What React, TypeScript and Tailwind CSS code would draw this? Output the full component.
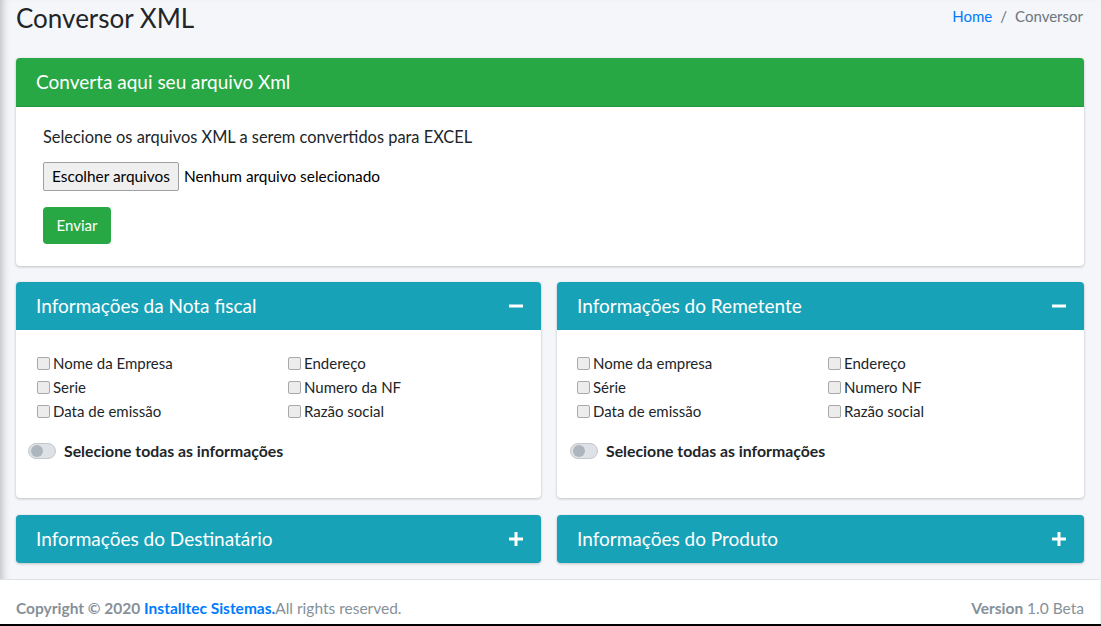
import React from 'react';

const font = { fontFamily: 'Lato, "Liberation Sans", sans-serif' };

const fieldsNota = [
  ['Nome da Empresa', 'Endereço'],
  ['Serie', 'Numero da NF'],
  ['Data de emissão', 'Razão social'],
];

const fieldsRemetente = [
  ['Nome da empresa', 'Endereço'],
  ['Série', 'Numero NF'],
  ['Data de emissão', 'Razão social'],
];

const Minus = () => (
  <svg width="14" height="14" viewBox="0 0 14 14" className="block">
    <rect x="0" y="5.5" width="14" height="3" fill="#fff" />
  </svg>
);

const Plus = () => (
  <svg width="14" height="14" viewBox="0 0 14 14" className="block">
    <rect x="0" y="5.5" width="14" height="3" fill="#fff" />
    <rect x="5.5" y="0" width="3" height="14" fill="#fff" />
  </svg>
);

const Check: React.FC<{ label: string }> = ({ label }) => (
  <label className="flex items-center h-6 text-[15px] text-[#212529]">
    <span className="w-[13px] h-[13px] mr-[3px] rounded-[2px] border border-[#a9a9a9] bg-[#ececec]" />
    {label}
  </label>
);

const Toggle = () => (
  <div className="relative w-[28px] h-[16px] rounded-full bg-[#dee2e6] border border-[#c3c8cd]">
    <div className="absolute left-[2px] top-[1px] w-[12px] h-[12px] rounded-full bg-[#adb5bd]" />
  </div>
);

const InfoCard: React.FC<{ title: string; rows: string[][]; offset: string; tOffset: string }> = ({ title, rows, offset, tOffset }) => (
  <div className="bg-white rounded shadow-[0_0_1px_rgba(0,0,0,0.125),0_1px_3px_rgba(0,0,0,0.2)] h-[216px]">
    <div className="h-[48px] bg-[#17a2b8] rounded-t flex items-center justify-between pl-[20px] pr-[18px]">
      <span className="text-white text-[19px]">{title}</span>
      <Minus />
    </div>
    <div className={`pt-[21px] ${offset}`}>
      {rows.map((r) => (
        <div key={r[0]} className="grid grid-cols-[251px_1fr]">
          <Check label={r[0]} />
          <Check label={r[1]} />
        </div>
      ))}
    </div>
    <div className={`flex items-center gap-2 mt-[16px] ${tOffset}`}>
      <Toggle />
      <span className="font-bold text-[15.8px] text-[#212529]">Selecione todas as informações</span>
    </div>
  </div>
);

const ClosedCard: React.FC<{ title: string }> = ({ title }) => (
  <div className="h-[48px] bg-[#17a2b8] rounded shadow-[0_0_1px_rgba(0,0,0,0.125),0_1px_3px_rgba(0,0,0,0.2)] flex items-center justify-between pl-[20px] pr-[18px]">
    <span className="text-white text-[19px]">{title}</span>
    <Plus />
  </div>
);

export default function App() {
  return (
    <div style={font} className="w-[1101px] h-[626px] flex bg-[#f4f6f9] overflow-hidden border-b-2 border-black">
      <div className="flex-1 flex flex-col shadow-[inset_9px_0_8px_-7px_rgba(0,0,0,0.25)]">
        <div className="flex-1 px-4">
          <div className="flex items-start justify-between h-[58px]">
            <h1 className="text-[26px] leading-[36px] text-[#212529] m-0">Conversor XML</h1>
            <div className="text-[15px] pt-[5px] mr-[1px]">
              <span className="text-[#007bff]">Home</span>
              <span className="text-[#6c757d] px-2">/</span>
              <span className="text-[#6c757d]">Conversor</span>
            </div>
          </div>

          <div className="bg-white rounded shadow-[0_0_1px_rgba(0,0,0,0.125),0_1px_3px_rgba(0,0,0,0.2)] h-[208px]">
            <div className="h-[49px] bg-[#28a745] rounded-t flex items-center px-[20px] border-b border-[#23963e]">
              <span className="text-white text-[19px]">Converta aqui seu arquivo Xml</span>
            </div>
            <div className="pl-[27px] pt-[18px]">
              <p className="text-[16.4px] text-[#212529] leading-[24px]">Selecione os arquivos XML a serem convertidos para EXCEL</p>
              <div className="flex items-center mt-[13px]">
                <div className="h-[29px] px-[8px] flex items-center bg-[#efefef] border border-[#a0a0a0] rounded-[2px] text-[15.4px] text-[#000]">
                  Escolher arquivos
                </div>
                <span className="ml-[5px] text-[15.4px] text-[#000]">Nenhum arquivo selecionado</span>
              </div>
              <button className="mt-[16px] h-[37px] w-[68px] bg-[#28a745] text-white text-[15px] rounded">Enviar</button>
            </div>
          </div>

          <div className="grid grid-cols-[525px_1fr] gap-4 mt-4">
            <InfoCard title="Informações da Nota fiscal" rows={fieldsNota} offset="pl-[21px]" tOffset="pl-[12px]" />
            <InfoCard title="Informações do Remetente" rows={fieldsRemetente} offset="pl-[20px]" tOffset="pl-[13px]" />
          </div>

          <div className="grid grid-cols-[525px_1fr] gap-4 mt-[17px]">
            <ClosedCard title="Informações do Destinatário" />
            <ClosedCard title="Informações do Produto" />
          </div>
        </div>

        <div className="h-[45px] mt-[16px] bg-white border-t border-[#dee2e6] flex items-center justify-between px-4 text-[15.5px] text-[#869099] pt-[13px]">
          <div>
            <span className="font-bold">Copyright © 2020 </span>
            <span className="font-bold text-[#007bff]">Installtec Sistemas.</span>
            <span>All rights reserved.</span>
          </div>
          <div>
            <span className="font-bold">Version</span> 1.0 Beta
          </div>
        </div>
      </div>
      <div className="w-[1px] bg-[#f1f1f1]" />
    </div>
  );
}
